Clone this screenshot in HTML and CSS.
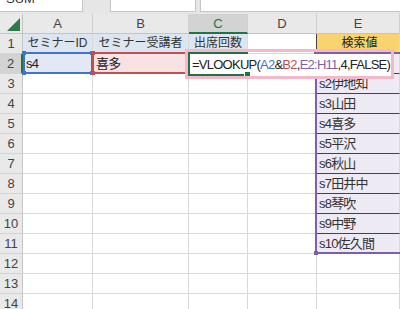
FILE: index.html
```html
<!DOCTYPE html>
<html lang="ja">
<head>
  <meta charset="UTF-8">
  <title>VLOOKUP</title>
  <link rel="stylesheet" href="styles.css">
</head>
<body>
  <div class="ribbon">
    <div class="name-box"><span>SUM</span></div>
    <div class="fx-box"></div>
    <div class="formula-bar"></div>
  </div>

  <div class="grid">
    <!-- 列見出し -->
    <div class="corner">
      <svg width="22" height="19" viewBox="0 0 22 19"><polygon points="20,4 20,17 7,17" fill="#2f7a48"/></svg>
    </div>
    <div class="col-head">A</div>
    <div class="col-head">B</div>
    <div class="col-head sel">C</div>
    <div class="col-head">D</div>
    <div class="col-head">E</div>

    <!-- 1行目 -->
    <div class="row-head">1</div>
    <div class="cell hdr">セミナーID</div>
    <div class="cell hdr">セミナー受講者</div>
    <div class="cell hdr">出席回数</div>
    <div class="cell edge"></div>
    <div class="cell key">検索値</div>

    <!-- 2行目 -->
    <div class="row-head sel">2</div>
    <div class="cell ref-a">s4</div>
    <div class="cell ref-b">喜多</div>
    <div class="cell"></div>
    <div class="cell"></div>
    <div class="cell list"></div>

    <div class="row-head">3</div><div class="cell"></div><div class="cell"></div><div class="cell"></div><div class="cell"></div><div class="cell list">s2伊地知</div>
    <div class="row-head">4</div><div class="cell"></div><div class="cell"></div><div class="cell"></div><div class="cell"></div><div class="cell list">s3山田</div>
    <div class="row-head">5</div><div class="cell"></div><div class="cell"></div><div class="cell"></div><div class="cell"></div><div class="cell list">s4喜多</div>
    <div class="row-head">6</div><div class="cell"></div><div class="cell"></div><div class="cell"></div><div class="cell"></div><div class="cell list">s5平沢</div>
    <div class="row-head">7</div><div class="cell"></div><div class="cell"></div><div class="cell"></div><div class="cell"></div><div class="cell list">s6秋山</div>
    <div class="row-head">8</div><div class="cell"></div><div class="cell"></div><div class="cell"></div><div class="cell"></div><div class="cell list">s7田井中</div>
    <div class="row-head">9</div><div class="cell"></div><div class="cell"></div><div class="cell"></div><div class="cell"></div><div class="cell list">s8琴吹</div>
    <div class="row-head">10</div><div class="cell"></div><div class="cell"></div><div class="cell"></div><div class="cell"></div><div class="cell list">s9中野</div>
    <div class="row-head">11</div><div class="cell"></div><div class="cell"></div><div class="cell"></div><div class="cell"></div><div class="cell list">s10佐久間</div>
    <div class="row-head">12</div><div class="cell"></div><div class="cell"></div><div class="cell"></div><div class="cell"></div><div class="cell"></div>
    <div class="row-head">13</div><div class="cell"></div><div class="cell"></div><div class="cell"></div><div class="cell"></div><div class="cell"></div>
    <div class="row-head">14</div><div class="cell"></div><div class="cell"></div><div class="cell"></div><div class="cell"></div><div class="cell"></div>

    <!-- 参照範囲の枠 -->
    <div class="ref-box box-a"><i class="h tl"></i><i class="h bl"></i><i class="h tr"></i><i class="h br"></i></div>
    <div class="ref-box box-b"><i class="h tl"></i><i class="h bl"></i><i class="h tr"></i><i class="h br"></i></div>
    <div class="ref-box box-e"><i class="h tl"></i><i class="h bl"></i></div>

    <!-- 編集中の数式 -->
    <div class="editor">=VLOOKUP(<span class="c-a">A2</span>&amp;<span class="c-b">B2</span>,<span class="c-e">E2:H11</span>,4,FALSE)</div>
    <div class="active"><i class="fill-handle"></i></div>
    <div class="focus-ring"></div>
  </div>
</body>
</html>
```

FILE: styles.css
```css
html, body {
  margin: 0;
  overflow: hidden;
}
body {
  width: 400px;
  height: 309px;
  background: #fff;
  font-family: "Liberation Sans", "Noto Sans CJK JP", sans-serif;
  font-size: 13px;
  color: #222;
}

/* 上の帯 */
.ribbon {
  height: 14px;
  background: #e6e6e6;
  display: flex;
}
.name-box {
  width: 83px;
  height: 12px;
  background: #fff;
  border-right: 1px solid #c6c6c6;
  border-bottom: 1px solid #c6c6c6;
  box-sizing: border-box;
  overflow: hidden;
}
.name-box span {
  display: block;
  margin: -9px 0 0 6px;
  line-height: 16px;
  font-size: 13px;
  color: #333;
}
.fx-box {
  margin-left: 27px;
  width: 86px;
  height: 12px;
  background: #fff;
  border: 1px solid #c6c6c6;
  border-top: none;
  box-sizing: border-box;
}
.formula-bar {
  margin-left: 4px;
  flex: 1;
  height: 12px;
  background: #fff;
  border-left: 1px solid #c6c6c6;
  border-bottom: 1px solid #c6c6c6;
  box-sizing: border-box;
}

/* シート */
.grid {
  position: relative;
  display: grid;
  grid-template-columns: 23px 70px 96px 59px 69px 1fr;
  grid-auto-rows: 20px;
}
.grid > div {
  box-sizing: border-box;
}
.corner {
  background: #e9e9e9;
  border-right: 1px solid #c4c4c4;
  border-bottom: 1px solid #c4c4c4;
}
.corner svg {
  display: block;
}
.col-head {
  background: #e9e9e9;
  border-right: 1px solid #cfcfcf;
  border-bottom: 1px solid #c4c4c4;
  text-align: center;
  line-height: 20px;
  color: #444;
}
.col-head.sel {
  background: #d3d3d3;
  color: #217346;
  border-bottom: 2px solid #217346;
}
.row-head {
  background: #e9e9e9;
  border-right: 1px solid #c4c4c4;
  border-bottom: 1px solid #d4d4d4;
  text-align: center;
  line-height: 19px;
  color: #444;
}
.row-head.sel {
  background: #d3d3d3;
  border-right: 2px solid #217346;
}
.cell {
  border-right: 1px solid #dadada;
  border-bottom: 1px solid #dadada;
  line-height: 19px;
  padding-left: 3px;
  white-space: nowrap;
  overflow: hidden;
  letter-spacing: -0.8px;
}
.cell.hdr {
  background: #dde5f1;
  text-align: center;
  padding-left: 0;
  letter-spacing: 0;
  font-size: 12px;
  color: #333;
}
.cell.edge {
  border-right-color: #444;
}
.cell.key {
  background: #f9d46e;
  border-bottom-color: #444;
  text-align: center;
  font-size: 12px;
  letter-spacing: 0;
}
.cell.list {
  background: #edeaf4;
  border-bottom-color: #444;
  padding-left: 2px;
  color: #333;
}
.cell.ref-a {
  background: #e2e9f5;
}
.cell.ref-b {
  background: #f9e2e3;
}

/* 参照の枠 */
.ref-box {
  position: absolute;
  box-sizing: border-box;
  border: 2px solid;
}
.box-a {
  left: 23px;
  top: 38px;
  width: 70px;
  height: 22px;
  border-color: #4472c4;
  color: #4472c4;
}
.box-b {
  left: 92px;
  top: 38px;
  width: 97px;
  height: 22px;
  border-color: #c0504d;
  color: #c0504d;
}
.box-e {
  left: 315px;
  top: 38px;
  width: 90px;
  height: 202px;
  border-color: #7f5fa8;
  border-right: none;
  color: #7f5fa8;
}
.h {
  position: absolute;
  width: 4px;
  height: 4px;
  background: currentColor;
}
.h.tl { left: -3px; top: -3px; }
.h.bl { left: -3px; bottom: -3px; }
.h.tr { right: -3px; top: -3px; }
.h.br { right: -3px; bottom: -3px; }

/* 編集中のセル */
.editor {
  position: absolute;
  left: 190px;
  top: 40px;
  width: 201px;
  height: 22px;
  padding-left: 2px;
  box-sizing: border-box;
  background: #fff;
  font-size: 13px;
  letter-spacing: -0.75px;
  line-height: 21px;
  white-space: nowrap;
  overflow: hidden;
  color: #222;
}
.c-a { color: #4472c4; }
.c-b { color: #c0504d; }
.c-e { color: #7f5fa8; }

.active {
  position: absolute;
  left: 188px;
  top: 38px;
  width: 60px;
  height: 24px;
  box-sizing: border-box;
  border: 2px solid #217346;
  border-right: none;
}
.fill-handle {
  position: absolute;
  right: -3px;
  bottom: -4px;
  width: 5px;
  height: 5px;
  background: #217346;
  border: 1px solid #fff;
}
.focus-ring {
  position: absolute;
  left: 185px;
  top: 35px;
  width: 209px;
  height: 30px;
  box-sizing: border-box;
  border: 3px solid #f5b8cb;
}
```
